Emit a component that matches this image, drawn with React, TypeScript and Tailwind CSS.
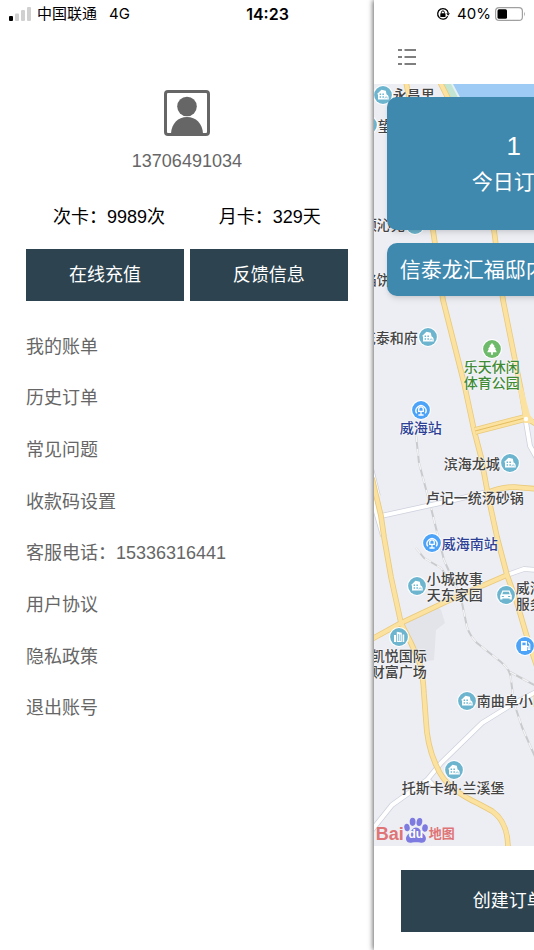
import type { ReactNode } from "react";
import clsx from "clsx";

type PoiKind = "home" | "park" | "train" | "car" | "fuel" | "tower";

interface Poi {
  kind: PoiKind;
  x: number;
  y: number;
}

interface MapLabel {
  lines: string[];
  place: string;
  color?: string;
}

const MENU_ITEMS = [
  "我的账单",
  "历史订单",
  "常见问题",
  "收款码设置",
  "客服电话：15336316441",
  "用户协议",
  "隐私政策",
  "退出账号",
];

const POIS: Poi[] = [
  { kind: "home", x: 9, y: 11 },
  { kind: "home", x: -6, y: 41 },
  { kind: "home", x: 41, y: 141 },
  { kind: "home", x: 54, y: 253 },
  { kind: "park", x: 118, y: 265 },
  { kind: "train", x: 47, y: 326 },
  { kind: "home", x: 136, y: 379 },
  { kind: "train", x: 58, y: 459 },
  { kind: "home", x: 43, y: 502 },
  { kind: "car", x: 132, y: 511 },
  { kind: "fuel", x: 151, y: 562 },
  { kind: "tower", x: 25, y: 553 },
  { kind: "home", x: 93, y: 617 },
  { kind: "home", x: 80, y: 686 },
];

const LABELS: MapLabel[] = [
  { lines: ["永昌里"], place: "left-[19px] top-[3px]" },
  { lines: ["望"], place: "left-[4px] top-[34px]" },
  { lines: ["顶沁苑"], place: "left-[-11px] top-[133px]" },
  { lines: ["馅饼"], place: "left-[-11px] top-[188px]" },
  { lines: ["花泰和府"], place: "left-[-12px] top-[246px]" },
  { lines: ["乐天休闲", "体育公园"], place: "left-[90px] top-[275px]", color: "text-[#3f8a35]" },
  { lines: ["威海站"], place: "left-[26px] top-[336px]", color: "text-[#2c3f94]" },
  { lines: ["滨海龙城"], place: "left-[70px] top-[372px]" },
  { lines: ["卢记一统汤砂锅"], place: "left-[52px] top-[406px]" },
  { lines: ["威海南站"], place: "left-[68px] top-[452px]", color: "text-[#2c3f94]" },
  { lines: ["小城故事", "天东家园"], place: "left-[53px] top-[487px]" },
  { lines: ["威海", "服务"], place: "left-[142px] top-[496px]" },
  { lines: ["凯悦国际", "财富广场"], place: "left-[-3px] top-[564px]" },
  { lines: ["南曲阜小区"], place: "left-[103px] top-[609px]" },
  { lines: ["托斯卡纳·兰溪堡"], place: "left-[28px] top-[696px]" },
];

const POI_COLORS: Record<PoiKind, string> = {
  home: "#6db5ce",
  tower: "#6db5ce",
  car: "#6db5ce",
  park: "#6dba6b",
  train: "#4da3f7",
  fuel: "#4da3f7",
};

// glyphs are drawn around 0,0 inside the marker circle
const POI_GLYPHS: Record<PoiKind, ReactNode> = {
  home: (
    <>
      <path d="M-6.200-.8-1.500-5.200 2.800-4.200 3.600-.6Q6 0 5.800 4.600H-5V-.8z" fill="#fff" />
      <path d="M-3.400-1.400h1.500V.1h-1.500zM-.6-1.400H.9V.1H-.6zM-3.400 1.300h1.500v1.500h-1.500zM-.6 1.300H.9v1.500H-.6z" fill="#6db5ce" />
      <path d="M1.900 3.300C2 1.400 4.200 1.400 4.500 3.300" fill="none" stroke="#6db5ce" strokeWidth=".7" />
    </>
  ),
  tower: (
    <>
      <path d="M-2.200-5.200 2.800-4.200V5H-2.200z" fill="#fff" />
      <path d="M-5-2h2V5h-2zM3.600-2.500h1.600V5H3.600z" fill="#fff" />
      <path d="M-.6-3V4M1.200-2.600V4" stroke="#6db5ce" strokeWidth=".8" />
    </>
  ),
  park: <path d="M0-6 2.600-3 2-2.600 3.900-.2 3.200.1 4.800 3.200H.9v2.600H-.9V3.200h-3.900L-3.200.1l-.7-.3L-2-2.600-2.600-3z" fill="#fff" />,
  train: (
    <>
      <path d="M-4.200 3.400A5 5 0 1 1 4.200 3.400" fill="none" stroke="#fff" strokeWidth="1.400" />
      <path d="M-2.300 1.300V-.8a2.300 2.300 0 0 1 4.600 0V1.300zM-2.900 1.300H2.900" fill="none" stroke="#fff" strokeWidth="1.300" />
      <path d="M0 1.300V5M-2.600 5H2.600" stroke="#fff" strokeWidth="1.300" />
    </>
  ),
  car: (
    <>
      <path d="M-3.600-4.600h7.200L5.200-.6 5.800 0v4.600H3.600V3.400h-7.200v1.200h-2.200V0l.6-.6z" fill="#fff" />
      <path d="M-2.800-3.300h5.600l.9 2.500h-7.400zM-4.200.9h2.100v1.200h-2.100zM2.100.9h2.100v1.200H2.100z" fill="#6db5ce" />
    </>
  ),
  fuel: (
    <>
      <path d="M-4-5h6V5H-4z" fill="#fff" />
      <path d="M-2.600-3.400H.6v2.600h-3.200z" fill="#4da3f7" />
      <path d="M1.600.4H3.200v3h1.600v-5.200L3-3.600" fill="none" stroke="#fff" strokeWidth="1.100" />
    </>
  ),
};

const YELLOW_ROADS = [
  "M32-2 35 13 59 146 69 216 90 299 100 346 107 373 115 416 123 453 133 491 143 519 153 553 164 586",
  "M66-2 74 14 120 146 129 216 137 256 147 306 152 334 164 341",
  "M113 409Q126 403 140 403L164 405",
  "M-2 394 7 432 10 453 17 493 27 539 37 559 45 577Q49 590 50 610L52 637Q53 661 62 681 68 696 80 705 90 713 105 720L118 727Q134 738 134 764",
  "M-2 555 27 539 80 514 133 491",
];

const WHITE_ROADS = [
  "M7 432 80 416 113 408",
  "M-4 380 4 412M-2 414 9 452",
  "M133 491 150 485 164 486",
  "M152 338 156 362 166 380",
  "M-2 746 18 721 53 696 67 679 108 639 137 621 164 607M52 694 60 702",
];

const RAILWAYS = [
  "M42 351 45 379 57 424 70 476 87 514 93 543Q96 552 103 559L127 578Q137 586 137 596L140 619 148 643 162 675",
  "M42 464 50 474 67 484 76 497",
  "M136 588 164 603",
];

const BUTTON = "bg-[#2d4450] text-lg text-white";

function MapCanvas() {
  return (
    <svg className="absolute top-0 left-0" width="534" height="762" viewBox="0 0 534 762" aria-hidden="true">
      <path d="M68 0H534V60H105z" fill="#c2e5d3" />
      <path d="M77 0H534V60H108z" fill="#e4eff2" />
      <path d="M79 0H534V60H111z" fill="#9dcbf6" />
      <path d="M28 541 64 523 67 526 71 539 62 546 60 576 42 579z" fill="#e3e4e9" />
      <g fill="none" strokeLinejoin="round">
        {RAILWAYS.map((d) => (
          <g key={d}>
            <path d={d} stroke="#c9cacc" strokeWidth="2" />
            <path d={d} stroke="#f4f4f5" strokeWidth="1.400" strokeDasharray="7 7" />
          </g>
        ))}
        {WHITE_ROADS.map((d) => (
          <path key={d} d={d} stroke="#cdd0dc" strokeWidth="5.500" />
        ))}
        {WHITE_ROADS.map((d) => (
          <path key={d} d={d} stroke="#fff" strokeWidth="4" />
        ))}
        {YELLOW_ROADS.map((d) => (
          <path key={d} d={d} stroke="#e9c97a" strokeWidth="5.600" />
        ))}
        {YELLOW_ROADS.map((d) => (
          <path key={d} d={d} stroke="#fbe2a0" strokeWidth="4" />
        ))}
        <path d="M101 347 151 334" stroke="#e9c97a" strokeWidth="8" />
        <path d="M101 347 151 334" stroke="#fbe2a0" strokeWidth="6.400" />
        <path d="M101 347 151 334" stroke="#e4bd60" strokeWidth="1" />
      </g>
      <path d="M144 304 149 304 156 331 162 339 150 339 149 331z" fill="#fbe2a0" />
      <circle cx="152" cy="335" r="2.200" fill="#fff" />
      {POIS.map(({ kind, x, y }) => (
        <g key={`${x}-${y}`} transform={`translate(${x} ${y})`}>
          <circle r="10" fill="#fff" />
          <circle r="8.900" fill={POI_COLORS[kind]} />
          {POI_GLYPHS[kind]}
        </g>
      ))}
    </svg>
  );
}

function BaiduLogo() {
  return (
    <div className="absolute top-[732px] left-[2px] flex h-7 items-end font-bold text-[#df7476]">
      <span className="text-lg leading-5">Bai</span>
      <span className="relative h-7 w-6">
        <svg className="absolute inset-0" width="24" height="28" viewBox="0 0 24 28" fill="#7d7be0" aria-hidden="true">
          <ellipse cx="3" cy="11.500" rx="2.700" ry="3.800" transform="rotate(-12 3 11.500)" />
          <ellipse cx="8.600" cy="5.800" rx="2.900" ry="4.100" />
          <ellipse cx="15.400" cy="6" rx="2.800" ry="4" transform="rotate(12 15.400 6)" />
          <ellipse cx="21" cy="12" rx="2.800" ry="3.700" transform="rotate(10 21 12)" />
          <path d="M12 11.500c3.200 0 4.300 3.200 6.300 5.200 2.300 2 4 3.700 3.600 6.600-.5 3.200-3.300 3.900-6 3.200-2.300-.5-5.300-.5-7.600 0-2.900.7-5.800.1-6.300-3.200-.4-3 1.500-4.600 3.600-6.400 2-2 3-5.400 6.400-5.400z" />
        </svg>
        <span className="absolute inset-x-0 bottom-1 text-center text-xs leading-3 text-white">du</span>
      </span>
      <span className="pl-px text-[13px] leading-5">地图</span>
    </div>
  );
}

function StatusBar() {
  return (
    <header className="absolute inset-x-0 top-0 z-20 grid h-7 grid-cols-3 items-center pr-2 pl-[9px] font-['Inter','Noto_Sans_CJK_SC',sans-serif] text-[15px] leading-5 text-black">
      <div className="flex items-center">
        <svg width="22" height="14" viewBox="0 0 22 14" aria-hidden="true">
          <rect y="9" width="4" height="5" rx="1" />
          <rect x="6" y="6.500" width="4" height="7.500" rx="1" fill="#d0d0d0" />
          <rect x="12" y="3" width="4" height="11" rx="1" fill="#d0d0d0" />
          <rect x="18" width="4" height="14" rx="1" fill="#d0d0d0" />
        </svg>
        <span className="pl-[6px]">中国联通</span>
        <span className="pl-3">4G</span>
      </div>
      <span className="text-center text-base leading-5 font-semibold">14:23</span>
      <div className="flex items-center justify-end">
        <svg width="14" height="14" viewBox="0 0 14 14" fill="none" stroke="#000" aria-hidden="true">
          <path d="M11.700 9.300A5.300 5.300 0 1 1 12.200 6" strokeWidth="1.300" />
          <path d="M10.300 6.200h3.600L12.100 8.800z" fill="#000" stroke="none" />
          <rect x="4.300" y="6.300" width="5.200" height="3.700" rx=".5" fill="#000" stroke="none" />
          <path d="M5.400 6.500V5.400a1.500 1.500 0 0 1 3 0v1.100" strokeWidth="1" />
        </svg>
        <span className="pl-[7px]">40%</span>
        <svg className="ml-1" width="31" height="14" viewBox="0 0 31 14" aria-hidden="true">
          <rect x=".6" y=".6" width="26.800" height="12.800" rx="3.500" fill="none" stroke="#a0a0a0" strokeWidth="1.200" />
          <rect x="2.500" y="2.300" width="9.500" height="9.400" rx="1.500" />
          <path d="M29 4.500q1.800 2.500 0 5z" fill="#a0a0a0" />
        </svg>
      </div>
    </header>
  );
}

function Drawer() {
  return (
    <aside className="w-[70%] shrink-0 px-[26px] pt-[90px] text-lg leading-6 text-[#666]">
      <svg className="mx-auto" width="46" height="46" viewBox="0 0 46 46" aria-hidden="true">
        <rect x="1.500" y="1.500" width="43" height="43" rx="2.500" fill="#fff" stroke="#666" strokeWidth="3" />
        <circle cx="23" cy="16.500" r="9.800" fill="#666" />
        <path d="M7 43.500C7.500 33.500 14 27 23 27s15.500 6.500 16 16.500z" fill="#666" />
      </svg>
      <p className="mt-[13px] text-center">13706491034</p>

      <div className="mt-8 flex justify-around text-black">
        <span>次卡：9989次</span>
        <span>月卡：329天</span>
      </div>

      <div className="mt-5 grid grid-cols-2 gap-[6px]">
        <button type="button" className={clsx(BUTTON, "h-[52px]")}>在线充值</button>
        <button type="button" className={clsx(BUTTON, "h-[52px]")}>反馈信息</button>
      </div>

      <nav className="mt-5">
        <ul className="grid h-[413px] grid-rows-8">
          {MENU_ITEMS.map((item) => (
            <li key={item} className="flex items-center">
              <a href="#">{item}</a>
            </li>
          ))}
        </ul>
      </nav>
    </aside>
  );
}

export default function App() {
  return (
    <div className="relative flex min-h-screen overflow-hidden bg-white font-['Liberation_Sans','Noto_Sans_CJK_SC',sans-serif]" lang="zh-CN">
      <StatusBar />
      <Drawer />

      {/* Home page, pushed aside by the drawer */}
      <main className="relative z-10 min-w-0 flex-1 overflow-hidden bg-white shadow-[-1px_0_5px_rgba(0,0,0,0.6)]">
        <div className="flex min-h-screen w-screen flex-col">
          <div className="flex h-[84px] items-end px-6 pb-[18px]">
            <button type="button" aria-label="菜单">
              <svg width="18" height="18" viewBox="0 0 18 18" stroke="#555" strokeWidth="1.500" aria-hidden="true">
                <path d="M0 2h4M6.500 2H18M0 9h4M6.500 9H18M0 16h4M6.500 16H18" />
              </svg>
            </button>
          </div>

          <section className="relative flex-1 overflow-hidden bg-[#edeef4]">
            <MapCanvas />
            {LABELS.map(({ lines, place, color }) => (
              <p
                key={place}
                className={clsx(
                  "absolute text-sm leading-4 font-medium whitespace-nowrap [text-shadow:0_0_2px_#fff,0_0_2px_#fff]",
                  place,
                  color ?? "text-[#444]",
                )}
              >
                {lines.map((line) => (
                  <span key={line} className="block">{line}</span>
                ))}
              </p>
            ))}
            <BaiduLogo />

            <div className="relative flex flex-col gap-[13px] p-[13px] text-[21px] text-white">
              <div className="grid h-[133px] grid-cols-2 items-center rounded-[10px] bg-[#3f88ae] shadow-md">
                <div className="text-center">
                  <p className="text-[26px] leading-9">1</p>
                  <p className="leading-9">今日订单</p>
                </div>
              </div>
              <div className="flex h-[53px] items-center rounded-[10px] bg-[#3f88ae] px-[13px] whitespace-nowrap shadow-md">
                信泰龙汇福邸内
              </div>
            </div>
          </section>

          <footer className="px-[27px] pt-6 pb-[18px]">
            <button type="button" className={clsx(BUTTON, "h-[62px] w-[45%]")}>创建订单</button>
          </footer>
        </div>
      </main>
    </div>
  );
}
